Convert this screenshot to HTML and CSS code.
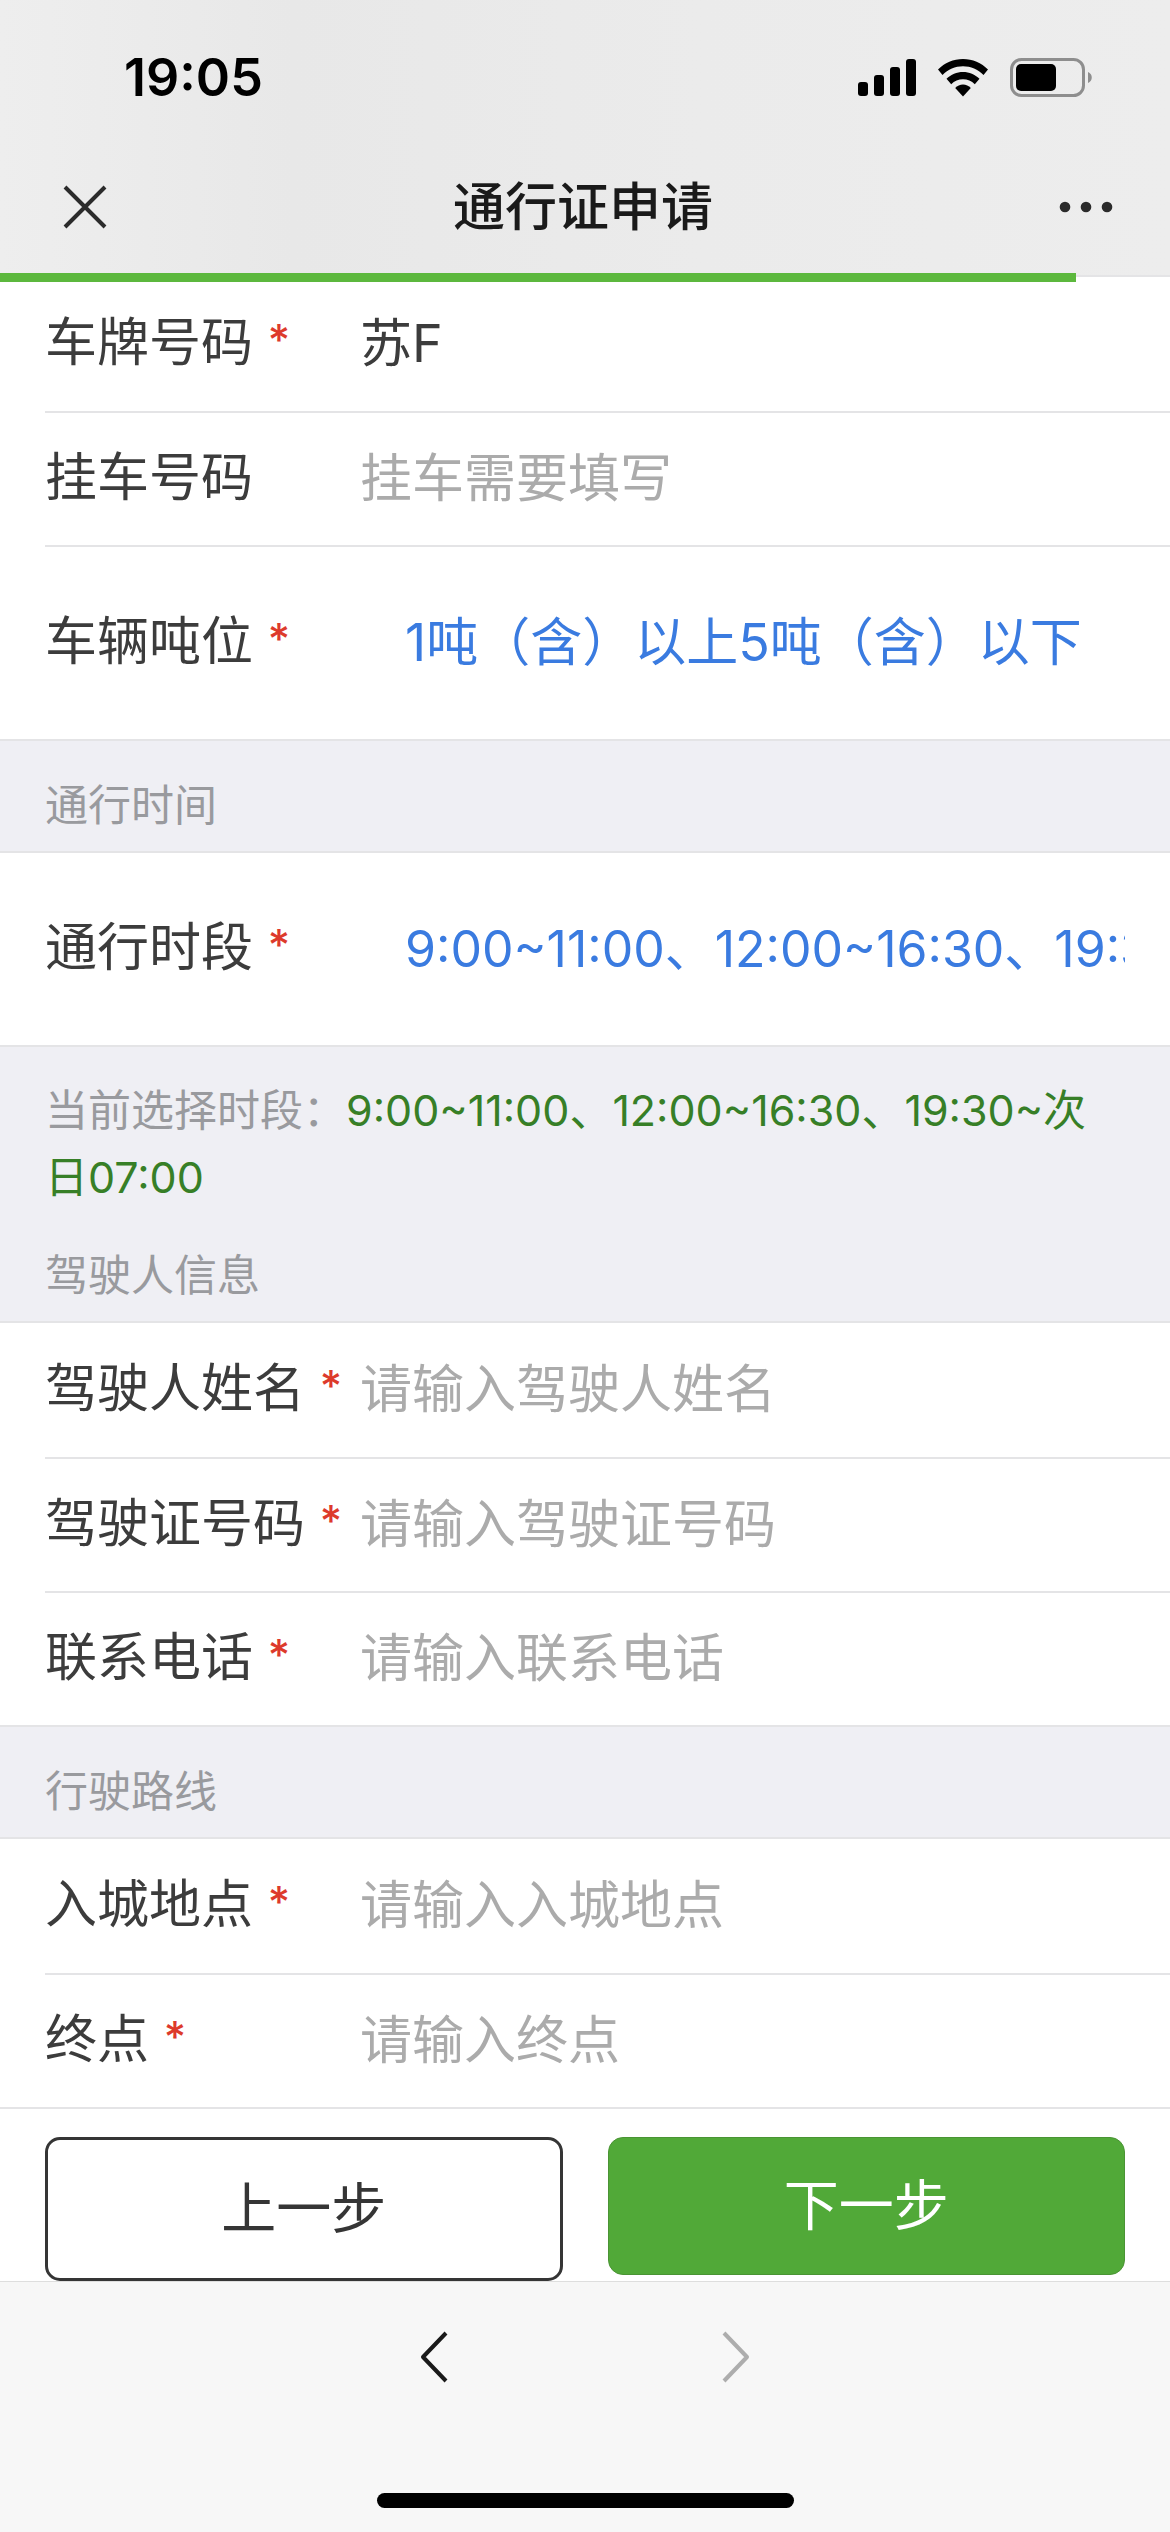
FILE: index.html
```html
<!DOCTYPE html>
<html lang="zh-CN">
<head>
  <meta charset="utf-8">
  <meta name="viewport" content="width=device-width, initial-scale=1">
  <title>通行证申请</title>
  <link rel="stylesheet" href="styles.css">
</head>
<body>
  <header class="header">
    <div class="status-bar">
      <span class="clock">19:05</span>
      <div class="status-icons">
        <svg width="58" height="38" viewBox="0 0 58 38">
          <rect x="0" y="23" width="10" height="14" rx="3"/>
          <rect x="16" y="16" width="10" height="21" rx="3"/>
          <rect x="32" y="8" width="10" height="29" rx="3"/>
          <rect x="48" y="0" width="10" height="37" rx="3"/>
        </svg>
        <svg width="50" height="38" viewBox="0 0 50 38">
          <path d="M25 0C34.500 0 43.500 3.600 50 10.600L45.500 16C40 10.400 32.800 7.300 25 7.300S10 10.400 4.500 16L0 10.600C6.500 3.600 15.500 0 25 0Z"/>
          <path d="M25 13C31.300 13 37 15.500 41.500 19.800L36.800 25.200C33.600 22 29.500 20.300 25 20.300S16.400 22 13.200 25.200L8.500 19.800C13 15.500 18.700 13 25 13Z"/>
          <path d="M25 25.500C28 25.500 30.700 26.800 32.800 29L25 37.500L17.200 29C19.300 26.800 22 25.500 25 25.500Z"/>
        </svg>
        <svg width="83" height="40" viewBox="0 0 83 40">
          <rect x="1.500" y="1.500" width="72" height="36" rx="10" fill="none" stroke="#8e8e8e" stroke-width="3"/>
          <rect x="6" y="6" width="40" height="27" rx="5"/>
          <path d="M78 14C83 16 83 23 78 25Z" fill="#8e8e8e"/>
        </svg>
      </div>
    </div>
    <div class="nav-bar">
      <button class="icon-btn" aria-label="关闭">
        <svg width="44" height="44" viewBox="0 0 44 44" fill="none" stroke="#2b2b2b" stroke-width="4"><path d="M2 2L42 42M42 2L2 42"/></svg>
      </button>
      <h1 class="nav-title">通行证申请</h1>
      <button class="icon-btn" aria-label="更多">
        <svg width="54" height="12" viewBox="0 0 54 12" fill="#2b2b2b"><circle cx="6" cy="6" r="5.300"/><circle cx="27" cy="6" r="5.300"/><circle cx="48" cy="6" r="5.300"/></svg>
      </button>
    </div>
    <div class="progress"></div>
  </header>

  <form class="form">
    <div class="cells">
      <div class="cell">
        <label class="cell-label" for="plate">车牌号码 <span class="required">*</span></label>
        <input class="cell-input" id="plate" type="text" value="苏F">
      </div>
      <div class="cell">
        <label class="cell-label" for="trailer">挂车号码</label>
        <input class="cell-input" id="trailer" type="text" placeholder="挂车需要填写">
      </div>
      <div class="cell cell-tall">
        <label class="cell-label" for="tonnage">车辆吨位 <span class="required">*</span></label>
        <select class="cell-select" id="tonnage">
          <option>1吨（含）以上5吨（含）以下</option>
        </select>
      </div>
    </div>

    <h2 class="section-title">通行时间</h2>
    <div class="cells">
      <div class="cell cell-tall">
        <label class="cell-label" for="period">通行时段 <span class="required">*</span></label>
        <select class="cell-select select-period" id="period">
          <option>9:00~11:00、12:00~16:30、19:30~次日07:00</option>
        </select>
      </div>
    </div>
    <p class="hint">当前选择时段：<span class="hint-value">9:00~11:00、12:00~16:30、19:30~次日07:00</span></p>

    <h2 class="section-title">驾驶人信息</h2>
    <div class="cells">
      <div class="cell">
        <label class="cell-label" for="driver">驾驶人姓名 <span class="required">*</span></label>
        <input class="cell-input" id="driver" type="text" placeholder="请输入驾驶人姓名">
      </div>
      <div class="cell">
        <label class="cell-label" for="license">驾驶证号码 <span class="required">*</span></label>
        <input class="cell-input" id="license" type="text" placeholder="请输入驾驶证号码">
      </div>
      <div class="cell">
        <label class="cell-label" for="phone">联系电话 <span class="required">*</span></label>
        <input class="cell-input" id="phone" type="tel" placeholder="请输入联系电话">
      </div>
    </div>

    <h2 class="section-title">行驶路线</h2>
    <div class="cells">
      <div class="cell">
        <label class="cell-label" for="entry">入城地点 <span class="required">*</span></label>
        <input class="cell-input" id="entry" type="text" placeholder="请输入入城地点">
      </div>
      <div class="cell">
        <label class="cell-label" for="dest">终点 <span class="required">*</span></label>
        <input class="cell-input" id="dest" type="text" placeholder="请输入终点">
      </div>
    </div>

    <div class="actions">
      <button class="btn btn-plain" type="button">上一步</button>
      <button class="btn btn-primary" type="button">下一步</button>
    </div>
  </form>

  <footer class="toolbar">
    <div class="toolbar-nav">
      <button class="icon-btn" aria-label="后退">
        <svg width="28" height="52" viewBox="0 0 28 52" fill="none" stroke="#1a1a1a" stroke-width="4" stroke-linejoin="round"><path d="M26 2L3 26L26 50"/></svg>
      </button>
      <button class="icon-btn" aria-label="前进" disabled>
        <svg width="28" height="52" viewBox="0 0 28 52" fill="none" stroke="#adadad" stroke-width="4" stroke-linejoin="round"><path d="M2 2L25 26L2 50"/></svg>
      </button>
    </div>
    <div class="home-indicator"></div>
  </footer>
</body>
</html>
```
FILE: styles.css
```css
:root {
  --text: #3c3c3c;
  --placeholder: #ababab;
  --muted: #999a9e;
  --border: #e4e4e6;
  --background: #efeff4;
  --blue: #3a7be0;
  --green: #51a938;
  --green-dark: #377f27;
  --red: #dd3a2c;
}

* {
  box-sizing: border-box;
}

body {
  margin: 0;
  min-height: 100vh;
  display: flex;
  flex-direction: column;
  font-family: Inter, "Noto Sans CJK SC", sans-serif;
  font-size: 52px;
  line-height: 72px;
  color: var(--text);
  background: #f7f7f7;
}

button,
input,
select {
  font-family: inherit;
  font-size: inherit;
  line-height: inherit;
  color: inherit;
  margin: 0;
  padding: 0;
  border: none;
  background: none;
}

h1,
h2,
p {
  margin: 0;
  font-weight: 400;
}

svg {
  display: block;
}

/* header */
.header {
  position: relative;
  background: linear-gradient(90deg, #eeeeee, #e8e8e8 25%, #ebebeb 60%, #ededed);
}

.status-bar {
  display: flex;
  justify-content: space-between;
  align-items: center;
  height: 141px;
  padding: 15px 77px 0 124px;
}

.clock {
  font-weight: 600;
  color: #000;
}

.status-icons {
  display: flex;
  align-items: center;
  gap: 22px;
}

.nav-bar {
  display: flex;
  justify-content: space-between;
  align-items: center;
  height: 134px;
  padding: 0 57px 3px 63px;
}

.nav-title {
  padding-top: 2px;
  font-size: 52px;
  font-weight: 500;
  color: #1a1a1a;
}

.icon-btn {
  cursor: pointer;
}

.progress {
  position: absolute;
  left: 0;
  top: 273px;
  width: 92%;
  height: 9px;
  background: #5cb83d;
}

/* form */
.form {
  background: var(--background);
}

.cells {
  padding-left: 45px;
  background: #fff;
  border-top: 2px solid var(--border);
  border-bottom: 2px solid var(--border);
}

.cell {
  display: flex;
  align-items: center;
  height: 134px;
  padding-right: 45px;
}

.cell + .cell {
  border-top: 2px solid var(--border);
}

.cell-tall {
  height: 192px;
}

.cell + .cell-tall {
  height: 194px;
}

.cell-label {
  width: 315px;
  flex-shrink: 0;
  padding-bottom: 3px;
  white-space: nowrap;
}

.required {
  font-size: 43px;
  font-weight: 500;
  line-height: 43px;
  vertical-align: 6px;
  color: var(--red);
}

.cell-input {
  flex: 1;
  min-width: 0;
  height: 72px;
  outline: none;
}

.cell-input::placeholder {
  color: var(--placeholder);
}

.cell-select {
  flex: 1;
  min-width: 0;
  height: 100%;
  padding-left: 45px;
  color: var(--blue);
  appearance: none;
}

.select-period {
  font-size: 50px;
}

.section-title {
  padding: 34px 45px 16px;
  font-size: 43px;
  line-height: 60px;
  color: var(--muted);
}

.hint {
  padding: 30px 45px 0;
  font-size: 43px;
  line-height: 67px;
  color: var(--muted);
}

.hint-value {
  color: var(--green-dark);
}

/* buttons */
.actions {
  display: grid;
  grid-template-columns: 1fr 1fr;
  align-items: start;
  gap: 45px;
  padding: 28px 45px 0;
  background: #fff;
}

.btn {
  height: 138px;
  padding-bottom: 2px;
  font-size: 55px;
  border-radius: 15px;
  cursor: pointer;
}

.btn-plain {
  height: 144px;
  border: 3px solid #353535;
  color: #353535;
}

.btn-primary {
  background: var(--green);
  border: 1px solid #4a9434;
  color: #fff;
}

/* bottom toolbar */
.toolbar {
  flex: 1;
  display: flex;
  flex-direction: column;
  justify-content: space-between;
  align-items: center;
  padding-bottom: 24px;
  border-top: 1px solid #dedede;
}

.toolbar-nav {
  display: flex;
  align-items: center;
  gap: 274px;
  height: 150px;
}

.home-indicator {
  width: 417px;
  height: 15px;
  border-radius: 8px;
  background: #000;
}
```
